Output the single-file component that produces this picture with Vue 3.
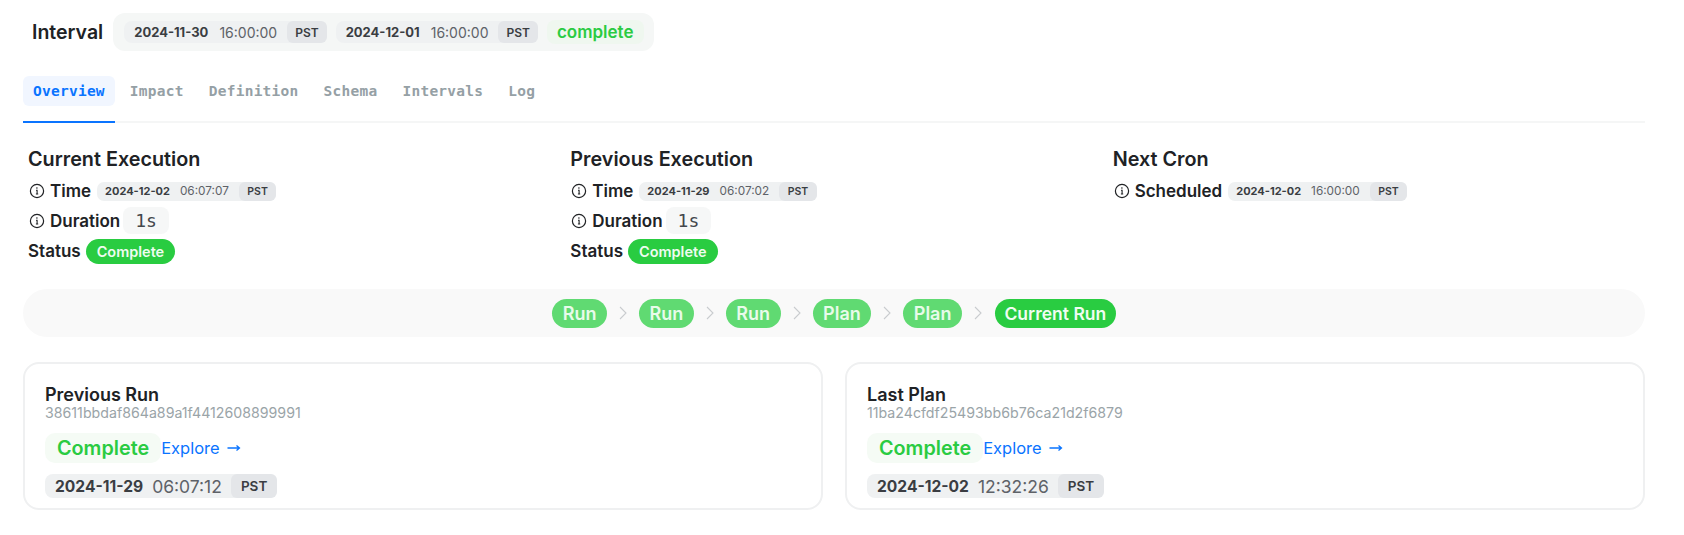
<script setup>
const intervals = [
  { date: '2024-11-30', time: '16:00:00' },
  { date: '2024-12-01', time: '16:00:00' }
]
const tabs = ['Overview', 'Impact', 'Definition', 'Schema', 'Intervals', 'Log']
const executions = [
  {
    title: 'Current Execution',
    rows: [{ label: 'Time', date: '2024-12-02', time: '06:07:07' }],
    duration: '1s',
    status: 'Complete'
  },
  {
    title: 'Previous Execution',
    rows: [{ label: 'Time', date: '2024-11-29', time: '06:07:02' }],
    duration: '1s',
    status: 'Complete'
  },
  {
    title: 'Next Cron',
    rows: [{ label: 'Scheduled', date: '2024-12-02', time: '16:00:00' }]
  }
]
const steps = ['Run', 'Run', 'Run', 'Plan', 'Plan', 'Current Run']
const cards = [
  { title: 'Previous Run', hash: '38611bbdaf864a89a1f4412608899991', date: '2024-11-29', time: '06:07:12' },
  { title: 'Last Plan', hash: '11ba24cfdf25493bb6b76ca21d2f6879', date: '2024-12-02', time: '12:32:26' }
]
</script>

<template>
  <div class="page">
    <div class="interval">
      <h2 class="interval-title">Interval</h2>
      <div class="interval-box">
        <span v-for="item in intervals" :key="item.date" class="stamp">
          <b>{{ item.date }}</b>
          <span class="time">{{ item.time }}</span>
          <span class="zone">PST</span>
        </span>
        <span class="interval-status">complete</span>
      </div>
    </div>

    <div class="tabs">
      <div v-for="(tab, index) in tabs" :key="tab" :class="index === 0 ? 'tab active' : 'tab'">
        <span>{{ tab }}</span>
      </div>
    </div>

    <div class="executions">
      <div v-for="item in executions" :key="item.title" class="execution">
        <h3>{{ item.title }}</h3>
        <div v-for="row in item.rows" :key="row.label" class="row time-row">
          <svg class="info" viewBox="0 0 16 16" fill="none" stroke="currentColor">
            <circle cx="8" cy="8" r="6.6" stroke-width="1.2" />
            <path d="M7 7.3h1.1v3.6M6.9 11h2.3" stroke-width="1.1" />
            <circle cx="7.9" cy="5" r="0.8" fill="currentColor" stroke="none" />
          </svg>
          <span class="label">{{ row.label }}</span>
          <span class="stamp small">
            <b>{{ row.date }}</b>
            <span class="time">{{ row.time }}</span>
            <span class="zone">PST</span>
          </span>
        </div>
        <div v-if="item.duration" class="row">
          <svg class="info" viewBox="0 0 16 16" fill="none" stroke="currentColor">
            <circle cx="8" cy="8" r="6.6" stroke-width="1.2" />
            <path d="M7 7.3h1.1v3.6M6.9 11h2.3" stroke-width="1.1" />
            <circle cx="7.9" cy="5" r="0.8" fill="currentColor" stroke="none" />
          </svg>
          <span class="label">Duration</span>
          <span class="duration">{{ item.duration }}</span>
        </div>
        <div v-if="item.status" class="row status-row">
          <span class="label">Status</span>
          <span class="status">{{ item.status }}</span>
        </div>
      </div>
    </div>

    <div class="steps">
      <template v-for="(step, index) in steps" :key="index">
        <span :class="index === steps.length - 1 ? 'step current' : 'step'">{{ step }}</span>
        <svg v-if="index < steps.length - 1" class="chevron" viewBox="0 0 8 14" fill="none">
          <path d="M1 1l6 6-6 6" stroke="#c9cccf" stroke-width="1.1" />
        </svg>
      </template>
    </div>

    <div class="cards">
      <div v-for="card in cards" :key="card.title" class="card">
        <div class="card-title">{{ card.title }}</div>
        <div class="card-hash">{{ card.hash }}</div>
        <div class="card-state">
          <span class="card-status">Complete</span>
          <a class="explore">Explore
            <svg viewBox="0 0 14 10" fill="none" stroke="currentColor" stroke-width="1.3">
              <path d="M0.5 5h12M9.5 2.4L12.5 5l-3 2.6" />
            </svg>
          </a>
        </div>
        <span class="stamp large">
          <b>{{ card.date }}</b>
          <span class="time">{{ card.time }}</span>
          <span class="zone">PST</span>
        </span>
      </div>
    </div>
  </div>
</template>

<style scoped>
.page {
  width: 1684px;
  height: 535px;
  box-sizing: border-box;
  padding: 13px 39px 0 23px;
  overflow: hidden;
  font-family: Inter, "Liberation Sans", sans-serif;
  color: #202225;
  background: #fff;
}
.interval {
  display: flex;
  align-items: center;
  gap: 10px;
  padding-left: 9px;
}
.interval-title {
  margin: 0;
  font-size: 19.5px;
  font-weight: 600;
  line-height: 38px;
}
.interval-box {
  display: flex;
  align-items: center;
  gap: 9px;
  height: 38px;
  box-sizing: border-box;
  padding: 0 10px 0 11px;
  border-radius: 12px;
  background: #f5f7f6;
}
.stamp {
  display: inline-flex;
  align-items: center;
  height: 22px;
  padding-left: 10px;
  border-radius: 8px;
  background: #eff1f2;
  font-size: 13px;
  color: #3a3d42;
  white-space: nowrap;
}
.stamp b {
  font-weight: 700;
}
.stamp .time {
  margin-left: 11px;
  font-size: 14px;
  color: #5e6268;
}
.zone {
  margin-left: 10px;
  height: 100%;
  display: inline-flex;
  align-items: center;
  padding: 0 8px;
  border-radius: 6px;
  background: #e4e6e9;
  font-size: 12px;
  font-weight: 600;
}
.interval-status {
  display: inline-flex;
  align-items: center;
  height: 24px;
  padding: 0 10px;
  border-radius: 8px;
  background: #eff7ef;
  color: #2acb42;
  font-size: 17px;
  font-weight: 600;
}
.tabs {
  display: flex;
  height: 45px;
  margin-top: 25px;
  border-bottom: 2px solid #f5f6f6;
  font-family: "DejaVu Sans Mono", "Liberation Mono", monospace;
  font-size: 14.5px;
  color: #95a0a5;
}
.tab {
  display: flex;
  align-items: flex-start;
  margin-right: 9px;
}
.tab span {
  height: 30px;
  line-height: 30px;
  padding: 0 8px;
  font-weight: 600;
  letter-spacing: 0.25px;
}
.tab.active {
  margin-bottom: -2px;
  border-bottom: 2px solid #0a74ff;
  color: #0a74ff;
  margin-right: 7px;
}
.tab.active span {
  padding: 0 10px;
  border-radius: 6px;
  background: #f1f6ff;
}
.executions {
  display: grid;
  grid-template-columns: repeat(3, 1fr);
  column-gap: 5px;
  margin-top: 19px;
}
.execution {
  padding-left: 5px;
}
.execution h3 {
  margin: 0;
  font-size: 19.8px;
  font-weight: 600;
  line-height: 34px;
}
.row {
  display: flex;
  align-items: center;
  height: 29px;
}
.time-row {
  height: 30px;
}
.info {
  width: 16px;
  height: 16px;
  margin-left: 1px;
  margin-right: 5px;
  color: #202225;
}
.label {
  font-size: 17px;
  font-weight: 600;
}
.stamp.small {
  margin-left: 6px;
  height: 19px;
  padding-left: 8px;
  font-size: 11px;
  border-radius: 7px;
}
.stamp.small .time {
  margin-left: 10px;
  font-size: 11.8px;
}
.stamp.small .zone {
  font-size: 10.5px;
  padding: 0 8.5px;
  margin-left: 10px;
}
.duration {
  margin-left: 3px;
  padding: 0 12px;
  height: 27px;
  line-height: 27px;
  border-radius: 8px;
  background: #f6f7f7;
  font-size: 18px;
  color: #43474c;
  font-family: "DejaVu Sans Mono", monospace;
}
.status-row {
  height: 32px;
}
.status {
  margin-left: 5px;
  height: 25px;
  line-height: 25px;
  padding: 0 11px;
  border-radius: 13px;
  background: #29cc41;
  color: #eefcf0;
  font-size: 14.5px;
  font-weight: 600;
}
.steps {
  display: flex;
  align-items: center;
  justify-content: center;
  height: 48px;
  margin-top: 22px;
  border-radius: 24px;
  background: #f9f9f9;
}
.step {
  height: 29px;
  line-height: 29px;
  padding: 0 10.5px;
  border-radius: 15px;
  background: #60da72;
  color: #e8fbea;
  font-size: 18px;
  font-weight: 600;
}
.step.current {
  background: #29cc41;
  color: #f0fdf2;
  margin-left: 1px;
  padding: 0 9.5px;
  font-size: 17.5px;
}
.chevron {
  width: 8px;
  height: 14px;
  margin: 0 12px;
}
.cards {
  display: grid;
  grid-template-columns: 1fr 1fr;
  gap: 22px;
  margin-top: 25px;
}
.card {
  height: 148px;
  box-sizing: border-box;
  padding: 21px 20px 0;
  border: 2px solid #eff0f1;
  border-radius: 16px;
}
.card-title {
  font-size: 18px;
  font-weight: 600;
  line-height: 20px;
}
.card-hash {
  font-size: 14.2px;
  line-height: 16px;
  color: #9aa4a8;
}
.card-state {
  display: flex;
  align-items: center;
  margin-top: 12px;
}
.card-status {
  padding: 0 12px;
  height: 30px;
  line-height: 30px;
  border-radius: 10px;
  background: #f5fbf5;
  color: #2acb42;
  font-size: 19.8px;
  font-weight: 600;
}
.explore {
  margin-left: 0;
  display: inline-flex;
  align-items: center;
  gap: 7px;
  color: #0a74ff;
  font-size: 16.5px;
}
.explore svg {
  width: 14px;
  height: 10px;
}
.stamp.large {
  margin-top: 11px;
  height: 24px;
  font-size: 15.6px;
  border-radius: 8px;
}
.stamp.large .time {
  margin-left: 9px;
  font-size: 17.5px;
}
.stamp.large .zone {
  font-size: 13.5px;
  margin-left: 9px;
  padding: 0 10px;
}
</style>

<style>
body {
  background: #fff;
}
</style>
